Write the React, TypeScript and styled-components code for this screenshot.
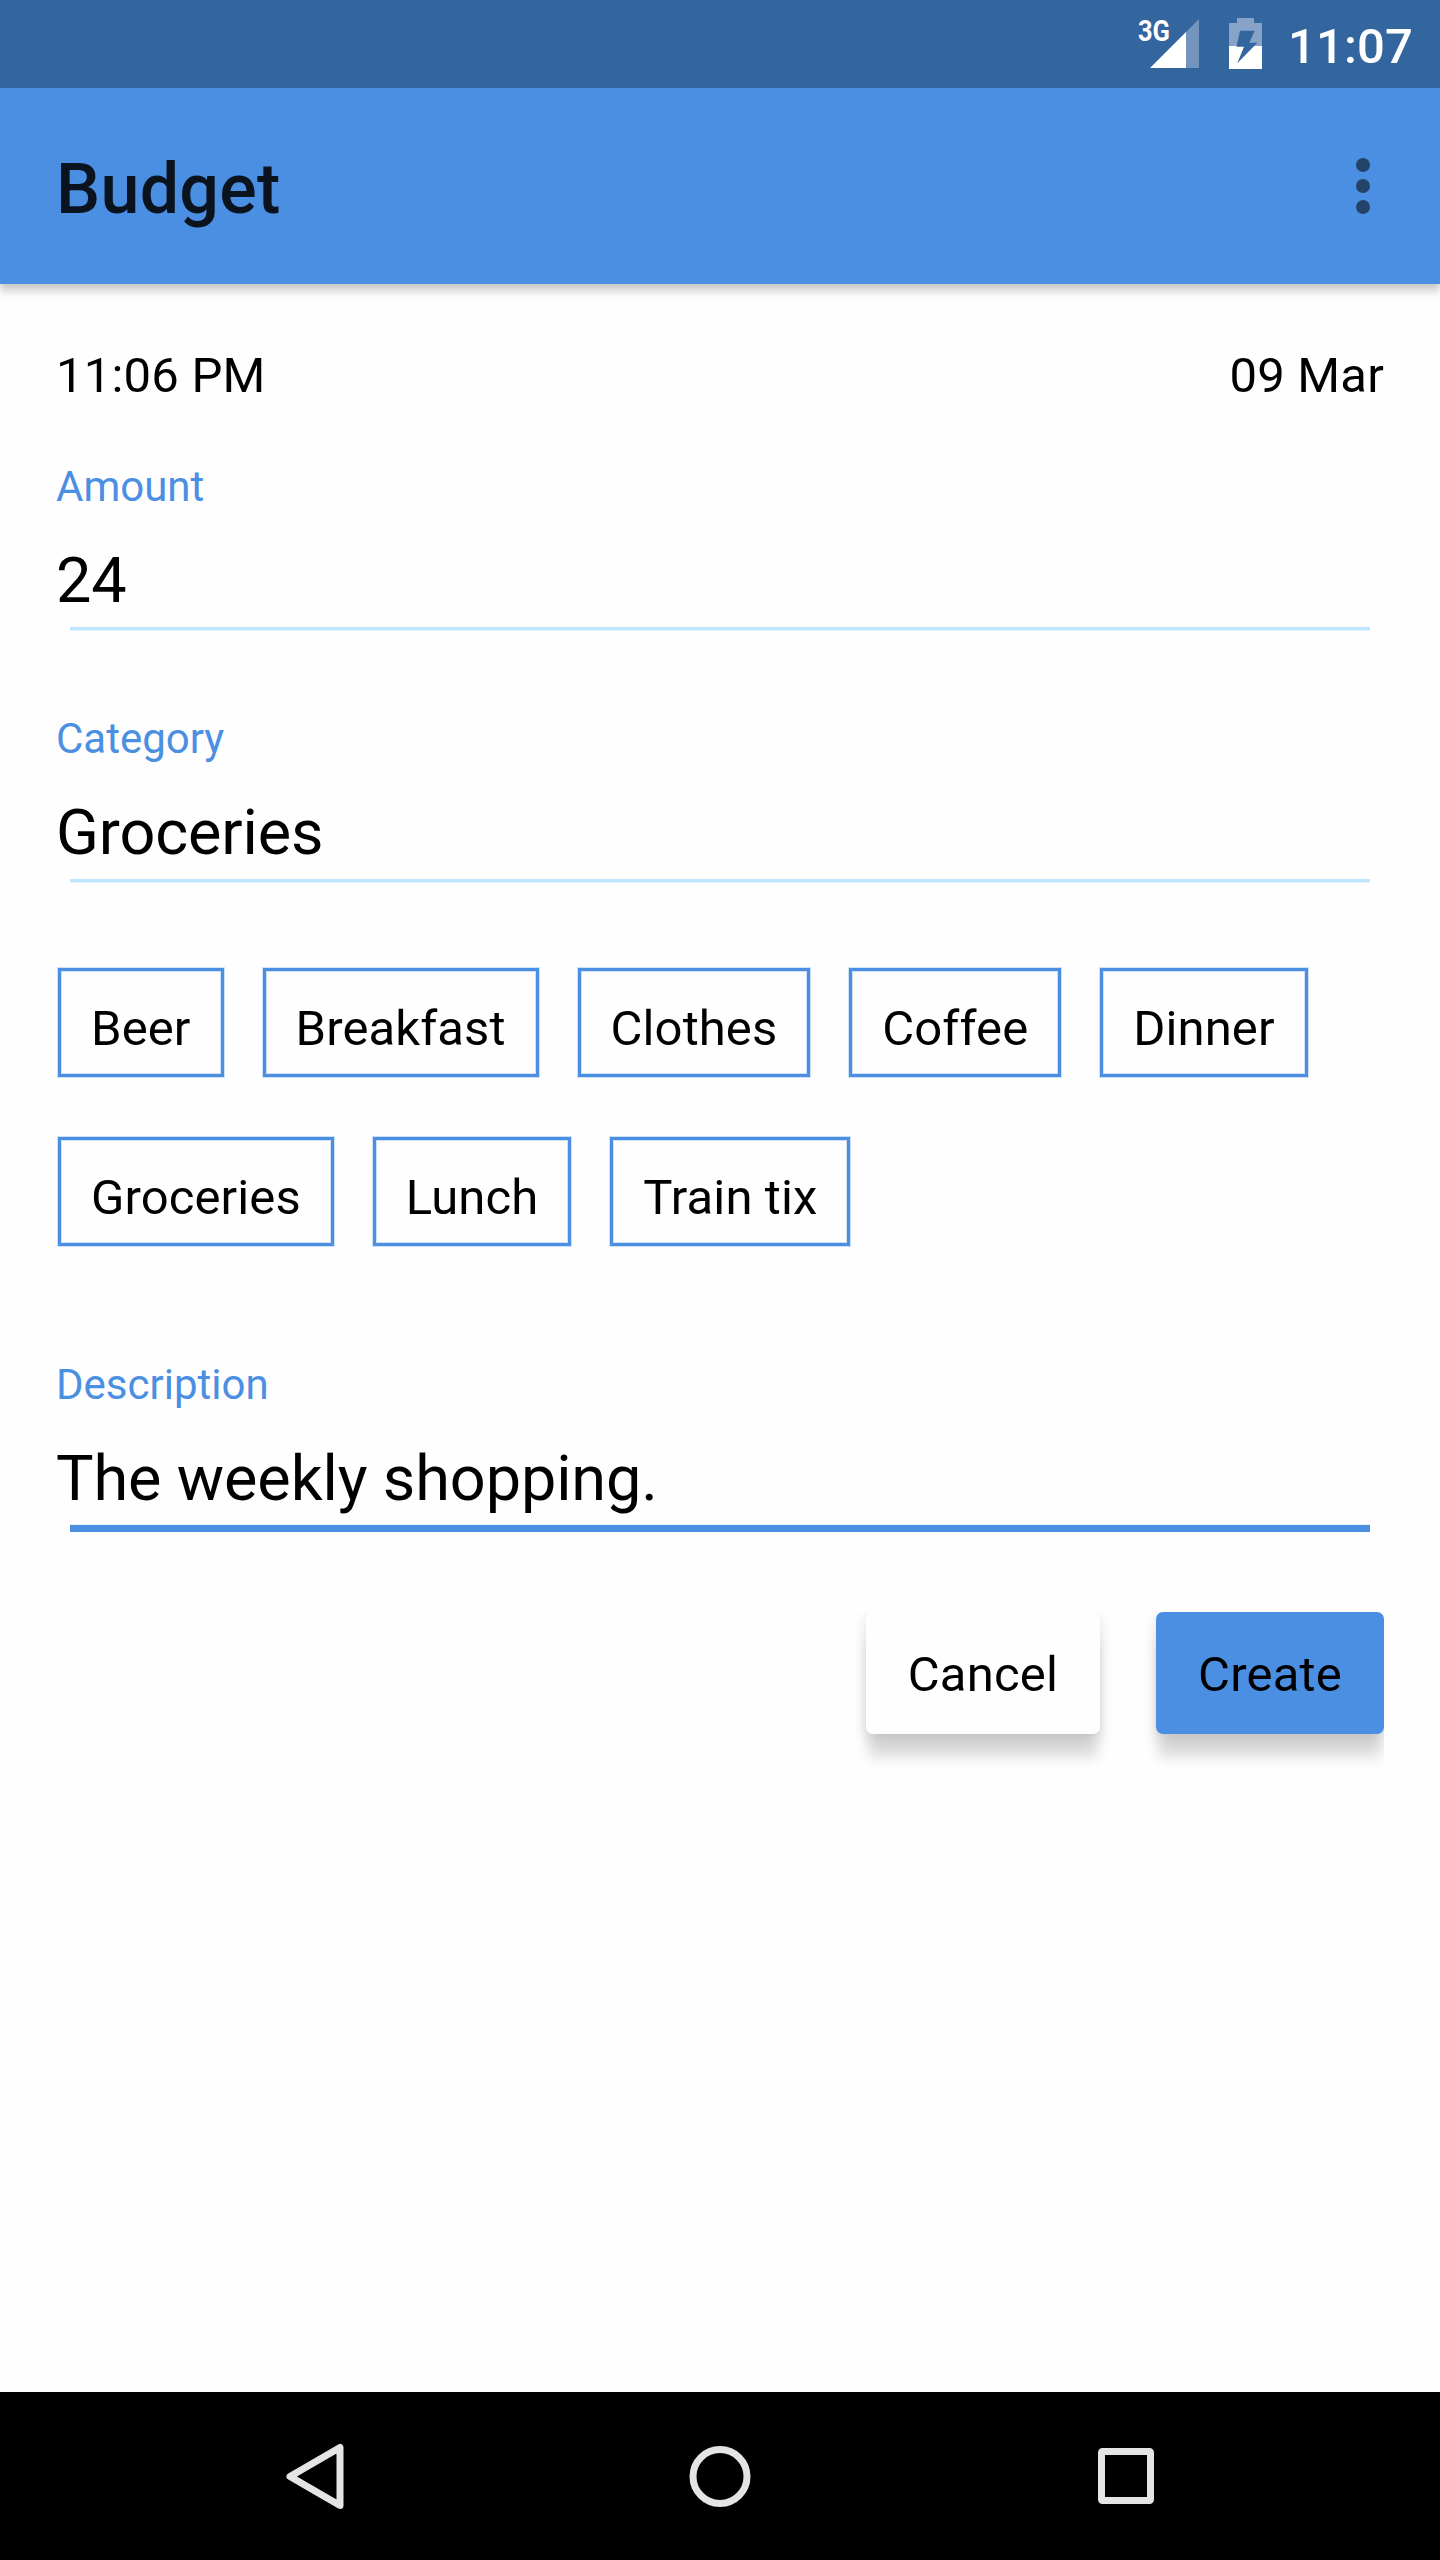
import React from "react";
import styled, { createGlobalStyle } from "styled-components";

const BLUE = "#4b8fe2";

const GlobalStyle = createGlobalStyle`
  * { box-sizing: border-box; }
  html, body { margin: 0; padding: 0; background: #fefefe; }
  body { font-family: Roboto, "Noto Sans", sans-serif; color: #000; }
`;

const Screen = styled.div`
  width: 1440px;
  height: 2560px;
  display: flex;
  flex-direction: column;
  background: #fefefe;
  overflow: hidden;
`;

const StatusBar = styled.header`
  height: 88px;
  flex: none;
  display: flex;
  justify-content: flex-end;
  background: #33659f;
  color: #fff;
`;

const StatusIcons = styled.svg`
  width: 140px;
  height: 88px;
  flex: none;
`;

const Clock = styled.time`
  width: 124px;
  margin: 0 28px 0 28px;
  font-size: 49px;
  font-weight: 500;
  line-height: 93px;
  letter-spacing: 0.15px;
  white-space: nowrap;
`;

const AppBar = styled.div`
  height: 196px;
  flex: none;
  display: flex;
  align-items: flex-start;
  justify-content: space-between;
  padding: 0 70px 0 56px;
  background: ${BLUE};
  box-shadow: 0 9px 7px rgba(0, 0, 0, 0.13), 0 3px 6px rgba(0, 0, 0, 0.1);
`;

const Title = styled.h1`
  margin: 0;
  font-size: 70px;
  font-weight: 500;
  line-height: 82px;
  letter-spacing: 0.25px;
  padding-top: 60px;
  color: #0a131e;
`;

const MenuButton = styled.button`
  display: flex;
  flex-direction: column;
  gap: 7px;
  margin: 70px 0 0;
  padding: 0;
  border: 0;
  background: none;
`;

const Dot = styled.span`
  width: 14px;
  height: 14px;
  border-radius: 50%;
  background: #234368;
`;

const Form = styled.main`
  flex: 1;
  display: flex;
  flex-direction: column;
  padding: 63px 56px 0;
`;

const DateRow = styled.div`
  display: flex;
  justify-content: space-between;
  font-size: 49px;
  line-height: 58px;
  letter-spacing: 0.2px;
  height: 111px;
`;

const Field = styled.section`
  display: flex;
  flex-direction: column;
  height: 252px;
`;

const Label = styled.label`
  font-size: 42px;
  line-height: 50px;
  height: 50px;
  margin-top: 4px;
  color: ${BLUE};
`;

const Value = styled.div`
  font-size: 63px;
  line-height: 74px;
  height: 74px;
  margin-top: 32px;
  letter-spacing: -0.12px;
`;

const Underline = styled.div<{ $active?: boolean }>`
  margin: ${(p) => (p.$active ? "8px 14px 0" : "9px 14px 0")};
  height: ${(p) => (p.$active ? 8 : 4)}px;
  background: ${(p) =>
    p.$active
      ? `linear-gradient(#e8f0fb 1px, ${BLUE} 1px)`
      : "linear-gradient(#bfe6fe 3px, #dff3fe 3px)"};
`;

const Chips = styled.div`
  display: flex;
  flex-wrap: wrap;
  gap: 60px 39px;
  padding: 6px 0 0 2px;
  height: 394px;
  align-content: flex-start;
`;

const Chip = styled.button`
  height: 109px;
  padding: 12px 30px 0;
  border: 3px solid ${BLUE};
  box-shadow: 0 0 0 1px #cfe1f8, inset 0 0 0 1px #cfe1f8;
  background: transparent;
  font: 400 49px/58px Roboto, "Noto Sans", sans-serif;
  letter-spacing: 0.1px;
  color: #000;
  white-space: nowrap;
`;

const Actions = styled.div`
  display: flex;
  justify-content: flex-end;
  gap: 56px;
  height: 170px;
  margin-top: 4px;
  overflow: hidden;
`;

const Button = styled.button<{ $primary?: boolean }>`
  height: 122px;
  padding: 4px 42px 0;
  border: 0;
  border-radius: 7px;
  background: ${(p) => (p.$primary ? BLUE : "#fefefe")};
  box-shadow: 0 25px 14px -2px rgba(0, 0, 0, 0.145), 0 4px 14px rgba(0, 0, 0, 0.12);
  font: 400 49px/58px Roboto, "Noto Sans", sans-serif;
  letter-spacing: 0.2px;
  color: #000;
`;

const NavBar = styled.nav`
  height: 168px;
  flex: none;
  display: flex;
  justify-content: center;
  align-items: center;
  gap: 308px;
  background: #000;
`;

const NavIcon = styled.svg`
  width: 98px;
  height: 98px;
  fill: none;
  stroke: #e4e4e4;
  stroke-width: 7;
  stroke-linejoin: round;
`;

const chips = ["Beer", "Breakfast", "Clothes", "Coffee", "Dinner", "Groceries", "Lunch", "Train tix"];

export default function App() {
  return (
    <>
      <GlobalStyle />
      <Screen>
        <StatusBar>
          <StatusIcons viewBox="0 0 140 88" overflow="visible">
            <defs>
              <linearGradient id="charge" x1="0" y1="0" x2="0" y2="1">
                <stop offset="0.549" stopColor="#87a3c8" />
                <stop offset="0.549" stopColor="#fff" />
              </linearGradient>
            </defs>
            <path d="M79 19V68H66V32Z" fill="#7394bd" />
            <path d="M66 32V68H30Z" fill="#fff" />
            <text
              x="18"
              y="41"
              fill="#fff"
              fontSize="29"
              fontWeight="700"
              textLength="32"
              lengthAdjust="spacingAndGlyphs"
            >
              3G
            </text>
            <path
              d="M117 18H134V23H142V69H109V23H117ZM120 30.7L116.5 46.7H124L117.3 63.3L137.3 42.7H129.3L134.7 30.7Z"
              fill="url(#charge)"
              fillRule="evenodd"
            />
          </StatusIcons>
          <Clock>11:07</Clock>
        </StatusBar>
        <AppBar>
          <Title>Budget</Title>
          <MenuButton aria-label="More options">
            <Dot />
            <Dot />
            <Dot />
          </MenuButton>
        </AppBar>
        <Form>
          <DateRow>
            <span>11:06 PM</span>
            <span>09 Mar</span>
          </DateRow>
          <Field>
            <Label>Amount</Label>
            <Value>24</Value>
            <Underline />
          </Field>
          <Field>
            <Label>Category</Label>
            <Value>Groceries</Value>
            <Underline />
          </Field>
          <Chips>
            {chips.map((name) => (
              <Chip key={name}>{name}</Chip>
            ))}
          </Chips>
          <Field>
            <Label>Description</Label>
            <Value>The weekly shopping.</Value>
            <Underline $active />
          </Field>
          <Actions>
            <Button>Cancel</Button>
            <Button $primary>Create</Button>
          </Actions>
        </Form>
        <NavBar>
          <NavIcon viewBox="0 0 98 98">
            <path d="M75 20.5V78.5L25 49.5Z" />
          </NavIcon>
          <NavIcon viewBox="0 0 98 98">
            <circle cx="49" cy="49.5" r="27" />
          </NavIcon>
          <NavIcon viewBox="0 0 98 98">
            <rect x="24.5" y="24.5" width="49" height="49" rx="1" />
          </NavIcon>
        </NavBar>
      </Screen>
    </>
  );
}
